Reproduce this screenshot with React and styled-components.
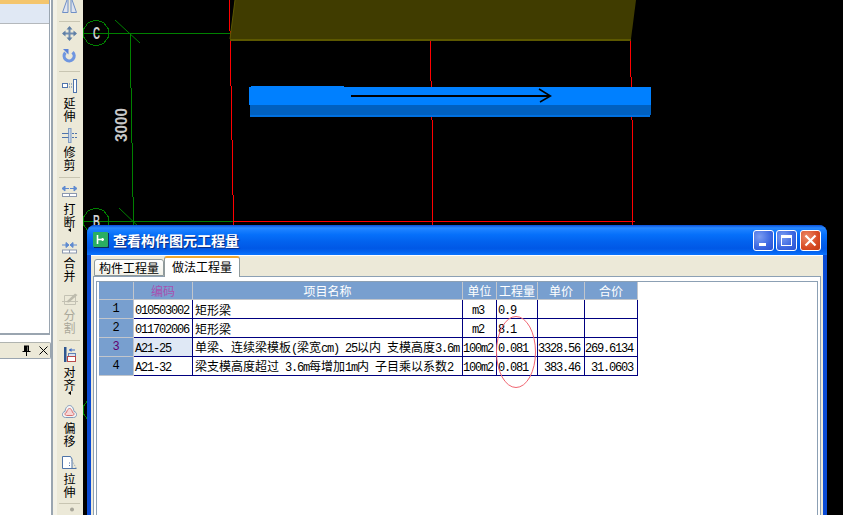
import styled, { createGlobalStyle } from "styled-components";

const CJK = `"Noto Sans CJK SC", "Liberation Sans", sans-serif`;

const GlobalStyle = createGlobalStyle`
  html, body {
    margin: 0;
    padding: 0;
    height: 100%;
    overflow: hidden;
    background: #fff;
    font-family: ${CJK};
    font-size: 12px;
  }
`;

const Page = styled.div`
  display: flex;
  width: 843px;
  height: 515px;
  overflow: hidden;
`;

/* left docked panels */
const SideColumn = styled.aside`
  display: flex;
  flex-direction: column;
  width: 51px;
  flex: none;
`;

const TreePanel = styled.div`
  width: 50px;
  height: 335px;
  box-sizing: border-box;
  flex: none;
  background: #fff;
  border-right: 1px solid #9aa5b0;
  border-bottom: 2px solid #9aa5b0;
`;

const OrangeBand = styled.div`
  height: 4px;
  background: #f4c56d;
`;

const SelectedBand = styled.div`
  height: 19px;
  background: #e0e8f4;
  border-bottom: 1px solid #b4b8bc;
`;

const DockTitle = styled.div`
  display: flex;
  align-items: center;
  justify-content: flex-end;
  gap: 8px;
  height: 15px;
  margin-top: 7px;
  padding-right: 2px;
  background: #ece9d8;
  border-top: 1px solid #b0b4b0;
  border-bottom: 1px solid #9aa5b0;
  border-right: 1px solid #9aa5b0;
  border-radius: 0 2px 2px 0;
`;

/* vertical toolbar */
const Toolbar = styled.nav`
  display: flex;
  flex-direction: column;
  align-items: center;
  width: 25px;
  flex: none;
  padding: 0 1px 0 4px;
  border-left: 2px solid #9aa5b0;
  background: linear-gradient(90deg, #f3f1e6 0, #f3f1e6 4px, #ece9d8 4px);
`;

const Separator = styled.div`
  width: 21px;
  height: 1px;
  flex: none;
  margin-top: ${(p) => p.$mt}px;
  background: #c8c5b2;
`;

const Tool = styled.div`
  display: flex;
  flex-direction: column;
  align-items: center;
  flex: none;
  margin-top: ${(p) => p.$mt || 0}px;
  color: ${(p) => (p.$disabled ? "#aaa89a" : "#000")};
`;

const ToolLabel = styled.span`
  display: block;
  width: 12px;
  margin-top: ${(p) => p.$mt}px;
  font-size: 12px;
  line-height: 13px;
  text-align: center;
`;

const DropArrow = styled.i`
  display: block;
  width: 0;
  height: 0;
  margin: 0 0 0 -1px;
  border-style: solid;
  border-width: 2.5px 3px 2.5px 0;
  border-color: transparent #000 transparent transparent;
`;

/* drawing area */
const Canvas = styled.main`
  position: relative;
  flex: 1;
  background: #000;
`;

const CadDrawing = styled.svg`
  display: block;
  width: 760px;
  height: 515px;
`;

/* floating XP window */
const Dialog = styled.section`
  position: absolute;
  left: 4px;
  top: 225px;
  width: 740px;
  height: 320px;
  display: flex;
  flex-direction: column;
  background: #0a4bd4;
  border-radius: 8px 8px 0 0;
  overflow: hidden;
`;

const TitleBar = styled.header`
  display: flex;
  align-items: center;
  height: 30px;
  flex: none;
  box-sizing: border-box;
  padding: 0 6px;
  background: linear-gradient(
    180deg,
    #0a50d8 0%,
    #2a8aff 10%,
    #1a80ff 16%,
    #0670fa 32%,
    #0262ee 55%,
    #0058e6 78%,
    #0464f0 90%,
    #0a74ff 100%
  );
`;

const TitleText = styled.h1`
  margin: 0 0 0 4px;
  flex: 1;
  color: #fff;
  font-size: 14px;
  line-height: 18px;
  font-weight: 700;
  text-shadow: 1px 1px 1px #0a2a80;
`;

const CaptionButton = styled.button`
  display: flex;
  align-items: center;
  justify-content: center;
  width: 21px;
  height: 21px;
  margin-left: ${(p) => p.$ml}px;
  padding: 0;
  border: 1px solid #fff;
  border-radius: 3px;
  background: ${(p) =>
    p.$close
      ? "radial-gradient(circle at 30% 30%, #ec8a68, #d84a24 60%, #c23a14)"
      : "radial-gradient(circle at 30% 30%, #7a9cf2, #3a66e0 60%, #2a50d0)"};
`;

const DialogBody = styled.div`
  display: flex;
  flex-direction: column;
  flex: 1;
  margin: 0 4px;
  padding: 0 2px;
  background: #ece9d8;
  border-top: 1px solid #fff;
`;

const TabStrip = styled.div`
  display: flex;
  align-items: flex-end;
  height: 20px;
  flex: none;
  padding-left: 1px;
`;

const Tab = styled.div`
  box-sizing: border-box;
  width: ${(p) => p.$w}px;
  height: ${(p) => (p.$active ? 21 : 17)}px;
  margin-bottom: ${(p) => (p.$active ? -1 : 0)}px;
  padding-top: ${(p) => (p.$active ? 1 : 0)}px;
  position: relative;
  z-index: ${(p) => (p.$active ? 1 : 0)};
  text-align: center;
  font-size: 12px;
  line-height: 15px;
  color: #000;
  background: ${(p) => (p.$active ? "#fff" : "linear-gradient(#fff, #f2f1e8)")};
  border: 1px solid #919b9c;
  border-bottom: ${(p) => (p.$active ? "none" : "1px solid #919b9c")};
  border-top: ${(p) => (p.$active ? "2px solid #f0a830" : "1px solid #919b9c")};
  border-radius: 3px 3px 0 0;
`;

const TabPane = styled.div`
  flex: 1;
  padding: 4px 2px 0;
  background: #fff;
  border: 1px solid #8ca0b4;
`;

const GridFrame = styled.div`
  position: relative;
  height: 100%;
  padding: 0 0 0 2px;
  border: 1px solid #8ca0b4;
  border-bottom: none;
`;

const QuantityTable = styled.table`
  table-layout: fixed;
  width: 539px;
  border-collapse: separate;
  border-spacing: 0;
  font-size: 12px;
`;

const HeaderCell = styled.th`
  height: 18px;
  box-sizing: border-box;
  padding: 0;
  font-size: 12px;
  font-weight: 400;
  color: ${(p) => (p.$accent ? "#a850b0" : "#fff")};
  background: #789fcf;
  border-right: 1px solid #c2c6cc;
  border-bottom: 1px solid #c2c6cc;
`;

const RowHead = styled.th`
  height: 19px;
  box-sizing: border-box;
  padding: 0;
  font-family: "Liberation Mono", monospace;
  font-size: 12px;
  font-weight: 400;
  color: ${(p) => (p.$current ? "#600070" : "#000")};
  background: #789fcf;
  border-right: 1px solid #c2c6cc;
  border-bottom: 1px solid #c2c6cc;
`;

const cellPadding = {
  left: "0 1px 0 2px",
  tight: "0 0 0 1px",
  center: "0 3px 0 0",
  right: "0 4px 0 0",
};

const Cell = styled.td`
  height: 19px;
  box-sizing: border-box;
  padding: ${(p) => cellPadding[p.$kind || "left"]};
  overflow: hidden;
  white-space: pre;
  text-align: ${(p) => (p.$kind === "center" || p.$kind === "right" ? p.$kind : "left")};
  color: #000;
  background: ${(p) => (p.$hilite ? "#dfe8f5" : "#fff")};
  border-right: 1px solid #000080;
  border-bottom: 1px solid #000080;
`;

const Latin = styled.span`
  font-family: "Liberation Mono", monospace;
  font-size: 12px;
  letter-spacing: -1.2px;
`;

const RedEllipse = styled.svg`
  position: absolute;
  left: 399px;
  top: 34px;
  width: 42px;
  height: 73px;
  pointer-events: none;
`;

const MirrorIcon = () => (
  <svg width="15" height="13" viewBox="0 0 15 13">
    <path d="M6 -3 L.5 12.5 H6 Z M9 -3 L14.5 12.5 H9 Z" fill="#dfe4ee" stroke="#6f8fc6" />
  </svg>
);

const MoveIcon = () => (
  <svg width="15" height="15" viewBox="0 0 15 15">
    <path d="M7.5 1.5 V13.5 M1.5 7.5 H13.5" stroke="#6f8cb0" strokeWidth="2" />
    <path d="M7.5 0 L10.5 3.5 H4.5 Z M7.5 15 L10.5 11.5 H4.5 Z M0 7.5 L3.5 4.5 V10.5 Z M15 7.5 L11.5 4.5 V10.5 Z" fill="#5f7fa6" />
  </svg>
);

const RotateIcon = () => (
  <svg width="15" height="14" viewBox="0 0 15 14">
    <path d="M10.5 3.2 A5 5 0 1 1 3.4 3.6" fill="none" stroke="#6f96e0" strokeWidth="3.2" />
    <path d="M1 0 H6.5 V5.5 Z" fill="#5a82d8" />
  </svg>
);

const ExtendIcon = () => (
  <svg width="15" height="14" viewBox="0 0 15 14">
    <rect x="11.5" y=".5" width="3" height="13" fill="#fff" stroke="#4f74ac" />
    <rect x=".5" y="4.5" width="5" height="4" fill="#fff" stroke="#4f74ac" />
    <path d="M7 5 H10 M7 8 H10" stroke="#4f74ac" strokeDasharray="1 1" />
  </svg>
);

const TrimIcon = () => (
  <svg width="15" height="15" viewBox="0 0 15 15">
    <rect x="6.5" y=".5" width="2.5" height="14" fill="#c8d6ea" stroke="#7f9cc4" />
    <path d="M0 5.5 H6.5 M0 9.5 H6.5" stroke="#4f74ac" />
    <path d="M10 5.5 H15 M10 9.5 H15" stroke="#4f74ac" strokeDasharray="2 1" />
  </svg>
);

const ArrowBoxIcon = ({ inward }) => (
  <svg width="15" height={inward ? 12 : 11} viewBox="0 0 15 11">
    {inward ? (
      <path d="M0 2.5 H4 M4 0 L7 2.5 L4 5 Z M15 2.5 H11 M11 0 L8 2.5 L11 5 Z" stroke="#5f8ad0" fill="#5f8ad0" strokeWidth="1" />
    ) : (
      <path d="M3 2.5 H7 M3 0 L0 2.5 L3 5 Z M12 2.5 H8 M12 0 L15 2.5 L12 5 Z" stroke="#5f8ad0" fill="#5f8ad0" strokeWidth="1" />
    )}
    <rect x=".5" y="7.5" width="14" height="3" fill="#fff" stroke="#8c98b0" />
    <path d="M7.5 7.5 V10.5" stroke="#8c98b0" />
  </svg>
);

const SplitIcon = () => (
  <svg width="16" height="14" viewBox="0 0 16 14">
    <path d="M2.5 3.5 H13.5 V12.5 H2.5 Z" fill="none" stroke="#c4c2b4" />
    <path d="M0 9.5 H16" stroke="#c4c2b4" />
    <path d="M4 10 L13 1.5 L15.5 3 L7 10.5 Z" fill="#bdbbad" />
  </svg>
);

const AlignIcon = () => (
  <svg width="12" height="15" viewBox="0 0 12 15">
    <rect x="0" y="0" width="2.5" height="15" fill="#2e5690" />
    <path d="M5 3 H11" stroke="#3f6fc8" />
    <path d="M5 3 L7.5 1 V5 Z" fill="#3f6fc8" />
    <rect x="4.5" y="6.5" width="7" height="3" fill="#d8e2f2" stroke="#5f80b4" />
    <rect x="3.5" y="9.5" width="8" height="5" fill="#fff" stroke="#b84a4a" />
  </svg>
);

const OffsetIcon = () => (
  <svg width="15" height="13" viewBox="0 0 15 13">
    <path d="M3.5 12.5 C-.5 12.5 -.5 7 3 6.5 C3.5 2 6 .5 7.5 .5 C10 .5 11.5 3 12 6.5 C15.5 7 15.5 12.5 11.5 12.5 Z" fill="#f4f4f4" stroke="#7f97b8" />
    <path d="M4.5 10.5 C2.5 10.5 2.5 7.5 4.5 7.5 C5 5 6.5 3.5 7.5 3.5 C9 3.5 10 5 10.5 7.5 C12.5 7.5 12.5 10.5 10.5 10.5 Z" fill="#f6d6d6" stroke="#d87070" />
  </svg>
);

const StretchIcon = () => (
  <svg width="15" height="13" viewBox="0 0 15 13">
    <path d="M.5 .5 H8.5 L10 3 V12.5 H.5 Z" fill="#fff" stroke="#4f74a8" />
    <path d="M14.5 12.5 H10 " stroke="#4f74a8" />
    <path d="M9.5 4 L14.5 12.5" stroke="#8ea0b8" strokeDasharray="1 1" />
    <path d="M7 7 H8 M7 9.5 H8" stroke="#4f74a8" />
  </svg>
);

const PartialIcon = () => (
  <svg width="15" height="6" viewBox="0 0 15 6">
    <circle cx="10" cy="2.5" r="2" fill="#a8a69a" />
  </svg>
);

// canvas uses page coordinates through the viewBox
const AxisBubble = ({ cx, cy, label }) => {
  const pts = Array.from({ length: 10 }, (_, i) => {
    const a = (Math.PI * 2 * i) / 10 - Math.PI / 2;
    return `${cx + 13 * Math.cos(a)},${cy + 13 * Math.sin(a)}`;
  }).join(" ");
  return (
    <g>
      <polygon points={pts} fill="none" stroke="#008000" shapeRendering="crispEdges" />
      {label && (
        <text
          x={cx - 3}
          y={cy + 6}
          fontFamily="Liberation Sans"
          fontSize="17"
          fontWeight="700"
          textLength="7"
          lengthAdjust="spacingAndGlyphs"
          fill="#d0d0d0"
        >
          {label}
        </text>
      )}
    </g>
  );
};

const Drawing = () => (
  <CadDrawing viewBox="83 0 760 515" shapeRendering="crispEdges">
    {/* green axes */}
    <path d="M83 33.5 H230 M83 221.5 H234" stroke="#008000" />
    <path d="M130.5 33 V88 M131.5 88 V143 M132.5 143 V197 M133.5 197 V225" stroke="#008000" fill="none" />
    <g shapeRendering="auto">
      <path d="M115 20 L140 43 M119 208 L141 229" stroke="#008000" />
      <AxisBubble cx={96} cy={33} label="C" />
      <AxisBubble cx={96} cy={221} label="B" />
      <AxisBubble cx={96} cy={410} />
    </g>
    <text
      transform="translate(126.5 142) rotate(-90)"
      fontFamily="Liberation Sans"
      fontSize="17"
      fontWeight="700"
      textLength="34"
      lengthAdjust="spacingAndGlyphs"
      fill="#c8c8c8"
    >
      3000
    </text>

    {/* red beam lines */}
    <path
      d="M229.5 0 V31 M230.5 31 V86 M231.5 86 V140 M232.5 140 V195 M233.5 195 V225
         M430.5 40 V81 M431.5 81 V120 M432.5 120 V225
         M630.5 40 V77 M631.5 77 V120 M632.5 120 V225
         M234 221.5 H635"
      stroke="#ff0000"
      fill="none"
    />

    {/* olive slab */}
    <path d="M235 0 H636 L631 39 H230 Z" fill="#403c00" shapeRendering="auto" />
    <path d="M230 39.5 H631" stroke="#5c5800" strokeWidth="2" />
    <path d="M235 0 L230 39" stroke="#5c5800" shapeRendering="auto" />

    {/* blue selected beam */}
    <rect x="251" y="86" width="93" height="2" fill="#0080ff" />
    <rect x="249" y="87" width="402" height="18" fill="#0080ff" />
    <rect x="250" y="105" width="401" height="10" fill="#0060c0" />
    <rect x="250" y="115" width="400" height="2" fill="#0070e0" />
    <path d="M351 96 H550" stroke="#000" strokeWidth="2" />
    <path d="M539 89 L550.5 96 L540 102" stroke="#000" strokeWidth="1.5" fill="none" shapeRendering="auto" />
  </CadDrawing>
);

const rows = [
  {
    id: "1",
    code: "010503002",
    name: "矩形梁",
    unit: "m3",
    qty: "0.9",
  },
  {
    id: "2",
    code: "011702006",
    name: "矩形梁",
    unit: "m2",
    qty: "8.1",
  },
  {
    id: "3",
    code: "A21-25",
    current: true,
    name: (
      <>
        单梁、连续梁模板<Latin>(</Latin>梁宽<Latin>cm) 25</Latin>以内<Latin> </Latin>支模高度<Latin>3.6m</Latin>
      </>
    ),
    unit: "100m2",
    qty: "0.081",
    price: "3328.56",
    total: "269.6134",
  },
  {
    id: "4",
    code: "A21-32",
    name: (
      <>
        梁支模高度超过<Latin> 3.6m</Latin>每增加<Latin>1m</Latin>内<Latin> </Latin>子目乘以系数<Latin>2</Latin>
      </>
    ),
    unit: "100m2",
    qty: "0.081",
    price: "383.46",
    total: "31.0603",
  },
];

export default function App() {
  return (
    <Page>
      <GlobalStyle />
      <SideColumn>
        <TreePanel>
          <OrangeBand />
          <SelectedBand />
        </TreePanel>
        <DockTitle>
          <svg width="9" height="11" viewBox="0 0 9 11">
            <path d="M2 .5 H7 V6 H8.5 V7 H5 V11 H4 V7 H.5 V6 H2 Z M5.5 1.5 V6 H6 V1.5 Z" fill="#000" fillRule="evenodd" />
          </svg>
          <svg width="9" height="9" viewBox="0 0 9 9">
            <path d="M.5 .5 L8.5 8.5 M8.5 .5 L.5 8.5" stroke="#000" />
          </svg>
        </DockTitle>
      </SideColumn>

      <Toolbar>
        <Tool><MirrorIcon /></Tool>
        <Separator $mt={8} />
        <Tool $mt={4}><MoveIcon /></Tool>
        <Tool $mt={8}><RotateIcon /></Tool>
        <Separator $mt={8} />
        <Tool $mt={7}><ExtendIcon /><ToolLabel $mt={3}>延伸</ToolLabel></Tool>
        <Tool $mt={6}><TrimIcon /><ToolLabel $mt={2}>修剪</ToolLabel></Tool>
        <Separator $mt={6} />
        <Tool $mt={8}><ArrowBoxIcon /><ToolLabel $mt={5}>打断</ToolLabel><DropArrow /></Tool>
        <Tool $mt={10}><ArrowBoxIcon inward /><ToolLabel $mt={2}>合并</ToolLabel></Tool>
        <Tool $mt={10} $disabled><SplitIcon /><ToolLabel $mt={2}>分割</ToolLabel></Tool>
        <Separator $mt={6} />
        <Tool $mt={6}><AlignIcon /><ToolLabel $mt={3}>对齐</ToolLabel><DropArrow /></Tool>
        <Tool $mt={10}><OffsetIcon /><ToolLabel $mt={3}>偏移</ToolLabel></Tool>
        <Tool $mt={9}><StretchIcon /><ToolLabel $mt={3}>拉伸</ToolLabel></Tool>
        <Separator $mt={5} />
        <Tool $mt={3}><PartialIcon /></Tool>
      </Toolbar>

      <Canvas>
        <Drawing />
        <Dialog>
          <TitleBar>
            <svg width="16" height="16" viewBox="0 0 16 16">
              <rect x="1" y="1" width="15" height="15" fill="#0a2a60" />
              <rect width="15" height="15" rx="1" fill="#2aae62" />
              <path d="M4.5 3 V12 M4.5 7.5 H11 M9.5 6 V9" stroke="#fff" strokeWidth="1.6" fill="none" />
            </svg>
            <TitleText>查看构件图元工程量</TitleText>
            <CaptionButton aria-label="最小化" $ml={0}>
              <svg width="15" height="15" viewBox="0 0 15 15">
                <rect x="3" y="10" width="7" height="3" fill="#fff" />
              </svg>
            </CaptionButton>
            <CaptionButton aria-label="最大化" $ml={2}>
              <svg width="15" height="15" viewBox="0 0 15 15">
                <path d="M2 2 H13 V13 H2 Z M3 5 V12 H12 V5 Z" fill="#fff" fillRule="evenodd" />
              </svg>
            </CaptionButton>
            <CaptionButton aria-label="关闭" $close $ml={3}>
              <svg width="15" height="15" viewBox="0 0 15 15">
                <path d="M2.5 2.5 L12.5 12.5 M12.5 2.5 L2.5 12.5" stroke="#fff" strokeWidth="2.2" />
              </svg>
            </CaptionButton>
          </TitleBar>

          <DialogBody>
            <TabStrip>
              <Tab $w={70}>构件工程量</Tab>
              <Tab $w={76} $active>做法工程量</Tab>
            </TabStrip>
            <TabPane>
              <GridFrame>
                <QuantityTable>
                  <colgroup>
                    <col width="35" />
                    <col width="59" />
                    <col width="270" />
                    <col width="34" />
                    <col width="41" />
                    <col width="47" />
                    <col width="53" />
                  </colgroup>
                  <thead>
                    <tr>
                      <HeaderCell />
                      <HeaderCell $accent>编码</HeaderCell>
                      <HeaderCell>项目名称</HeaderCell>
                      <HeaderCell>单位</HeaderCell>
                      <HeaderCell>工程量</HeaderCell>
                      <HeaderCell>单价</HeaderCell>
                      <HeaderCell>合价</HeaderCell>
                    </tr>
                  </thead>
                  <tbody>
                    {rows.map((r) => (
                      <tr key={r.id}>
                        <RowHead $current={r.current}>{r.id}</RowHead>
                        <Cell $kind="tight" $hilite={r.current}><Latin>{r.code}</Latin></Cell>
                        <Cell>{r.name}</Cell>
                        <Cell $kind="center"><Latin>{r.unit}</Latin></Cell>
                        <Cell $kind="tight"><Latin>{r.qty}</Latin></Cell>
                        <Cell $kind="right"><Latin>{r.price}</Latin></Cell>
                        <Cell $kind="right"><Latin>{r.total}</Latin></Cell>
                      </tr>
                    ))}
                  </tbody>
                </QuantityTable>
                <RedEllipse viewBox="0 0 42 73">
                  <ellipse cx="20" cy="36" rx="19.5" ry="35.5" fill="none" stroke="#f06470" />
                </RedEllipse>
              </GridFrame>
            </TabPane>
          </DialogBody>
        </Dialog>
      </Canvas>
    </Page>
  );
}
